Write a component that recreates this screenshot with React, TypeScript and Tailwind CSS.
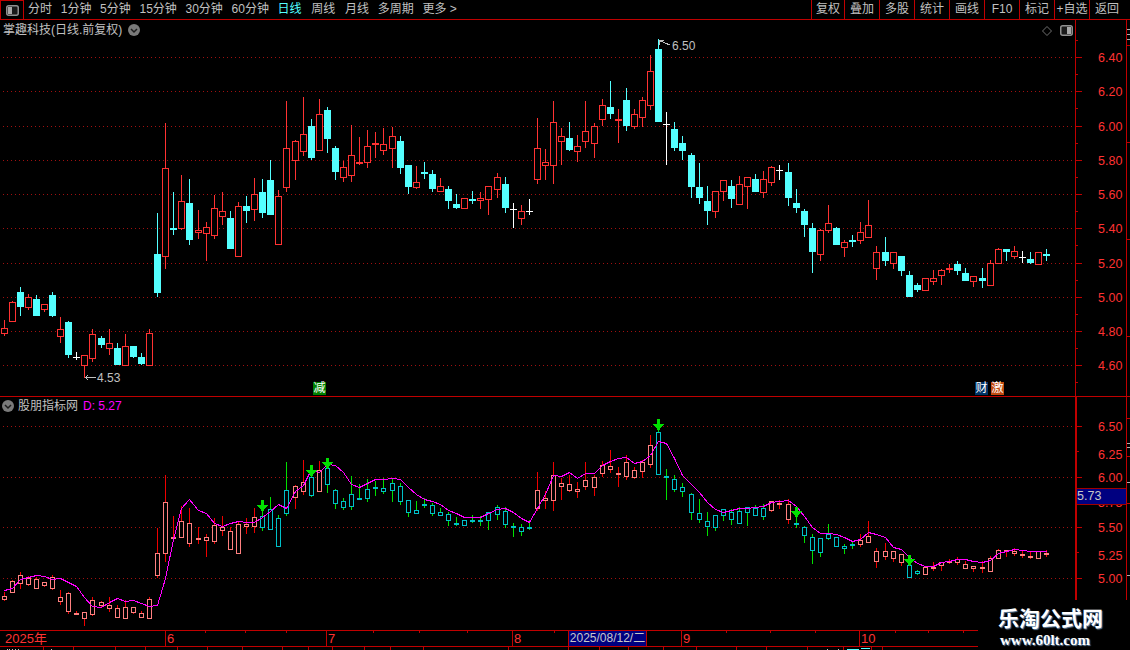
import React from 'react';

// [high, bodyTop, bodyBottom, low, kind] in screen pixels of the upper pane
type Kind = 'r' | 'c' | 'w';
type Candle = [number, number, number, number, Kind];

const candles: Candle[] = [
  [320, 328, 334, 336, 'r'], [301, 302, 322, 322, 'r'], [287, 292, 307, 316, 'c'], [294, 297, 308, 310, 'r'],
  [295, 299, 316, 316, 'c'], [304, 304, 310, 312, 'r'], [292, 295, 316, 317, 'c'], [317, 329, 337, 343, 'r'],
  [321, 322, 355, 358, 'c'], [352, 357, 358, 360, 'w'], [355, 355, 366, 378, 'r'], [329, 334, 359, 362, 'r'],
  [336, 338, 345, 348, 'c'], [329, 343, 349, 355, 'r'], [343, 348, 365, 365, 'c'], [334, 346, 366, 366, 'r'],
  [346, 346, 357, 358, 'c'], [353, 357, 364, 365, 'c'], [329, 333, 366, 366, 'r'], [213, 254, 293, 297, 'c'],
  [123, 168, 257, 269, 'r'], [192, 228, 230, 235, 'c'], [175, 201, 229, 230, 'r'], [179, 203, 240, 245, 'c'],
  [210, 230, 233, 239, 'r'], [222, 227, 234, 261, 'r'], [195, 208, 236, 239, 'r'], [192, 211, 217, 225, 'r'],
  [211, 218, 249, 249, 'c'], [202, 206, 257, 257, 'r'], [196, 206, 211, 223, 'c'], [178, 194, 210, 221, 'r'],
  [179, 192, 213, 218, 'c'], [160, 180, 215, 215, 'c'], [190, 196, 245, 245, 'r'], [101, 148, 188, 192, 'r'],
  [140, 141, 161, 180, 'r'], [97, 134, 152, 156, 'r'], [119, 126, 158, 160, 'c'], [99, 114, 151, 151, 'r'],
  [107, 110, 139, 153, 'c'], [146, 148, 172, 180, 'c'], [161, 167, 178, 182, 'r'], [125, 155, 176, 182, 'r'],
  [137, 162, 164, 165, 'r'], [130, 146, 163, 168, 'r'], [132, 143, 145, 158, 'r'], [128, 144, 151, 155, 'r'],
  [127, 136, 149, 168, 'r'], [136, 141, 168, 174, 'c'], [165, 165, 187, 194, 'c'], [166, 182, 188, 189, 'r'],
  [162, 172, 174, 179, 'c'], [170, 174, 189, 192, 'c'], [178, 186, 192, 192, 'r'], [186, 189, 201, 209, 'c'],
  [194, 204, 208, 209, 'c'], [198, 198, 209, 209, 'r'], [191, 199, 201, 204, 'c'], [192, 198, 201, 209, 'r'],
  [186, 186, 200, 215, 'r'], [173, 177, 190, 198, 'r'], [177, 184, 208, 213, 'c'], [203, 209, 210, 228, 'w'],
  [205, 211, 219, 225, 'r'], [199, 211, 212, 215, 'w'], [118, 148, 180, 184, 'r'], [149, 162, 166, 180, 'r'],
  [101, 122, 166, 184, 'r'], [128, 136, 142, 165, 'r'], [122, 138, 150, 151, 'c'], [135, 146, 152, 162, 'r'],
  [101, 131, 142, 148, 'r'], [123, 126, 144, 158, 'r'], [99, 105, 120, 126, 'r'], [81, 107, 114, 119, 'c'],
  [109, 119, 121, 143, 'r'], [88, 100, 126, 131, 'c'], [109, 114, 127, 129, 'r'], [97, 100, 118, 127, 'r'],
  [55, 71, 106, 110, 'r'], [39, 49, 122, 122, 'c'], [112, 124, 125, 165, 'w'], [122, 129, 148, 151, 'c'],
  [136, 143, 151, 160, 'c'], [153, 155, 187, 198, 'c'], [163, 187, 198, 204, 'c'], [186, 201, 211, 225, 'c'],
  [191, 191, 212, 218, 'r'], [180, 180, 192, 201, 'r'], [180, 186, 199, 208, 'c'], [176, 184, 205, 205, 'r'],
  [177, 177, 187, 209, 'r'], [174, 179, 192, 192, 'c'], [171, 179, 193, 198, 'r'], [166, 167, 183, 186, 'r'],
  [165, 170, 171, 180, 'w'], [163, 172, 198, 206, 'c'], [189, 203, 208, 213, 'c'], [209, 211, 225, 237, 'c'],
  [223, 228, 252, 273, 'c'], [229, 230, 255, 261, 'r'], [205, 223, 231, 233, 'r'], [227, 228, 245, 245, 'c'],
  [240, 242, 248, 257, 'r'], [235, 240, 242, 247, 'c'], [222, 232, 241, 244, 'r'], [200, 225, 238, 238, 'r'],
  [246, 252, 269, 280, 'r'], [237, 252, 261, 266, 'c'], [252, 252, 264, 269, 'r'], [256, 256, 271, 276, 'c'],
  [271, 275, 297, 297, 'c'], [283, 285, 290, 292, 'c'], [278, 278, 291, 291, 'r'], [270, 278, 282, 285, 'r'],
  [269, 270, 276, 285, 'r'], [264, 268, 270, 273, 'r'], [261, 264, 271, 275, 'c'], [268, 273, 281, 281, 'c'],
  [276, 276, 282, 287, 'r'], [268, 278, 281, 288, 'c'], [260, 263, 286, 286, 'r'], [248, 249, 264, 264, 'r'],
  [249, 249, 252, 261, 'c'], [246, 251, 257, 259, 'r'], [251, 257, 258, 263, 'w'], [252, 259, 263, 264, 'c'],
  [252, 252, 265, 265, 'r'], [249, 254, 256, 261, 'c'],
];

// indicator line, read off as 3x crop heights
const lineRaw = [
  585, 580, 552, 545, 540, 543, 553, 548, 560, 573, 605, 632, 637, 622, 610, 618, 615, 625, 633, 630, 550, 432, 340, 313,
  345, 353, 385, 392, 383, 377, 380, 382, 365, 347, 327, 338, 287, 270, 223, 232, 208, 210, 232, 268, 275, 265, 253,
  253, 250, 253, 275, 298, 312, 317, 327, 345, 355, 365, 367, 367, 355, 342, 340, 350, 370, 380, 340, 297, 240, 243,
  230, 250, 235, 235, 210, 198, 190, 187, 205, 197, 180, 137, 145, 190, 240, 267, 292, 320, 343, 350, 345, 340, 340,
  337, 333, 320, 318, 315, 332, 362, 395, 415, 413, 416, 425, 438, 433, 412, 417, 425, 455, 463, 487, 505, 514, 513,
  500, 497, 493, 493, 498, 500, 495, 475, 467, 463, 465, 467, 468, 468,
];

const jumps = [12, 24, 36, 48, 61, 73, 85, 97, 109, 121];
const cx = (i: number) => 4 + 8 * i + jumps.filter((j) => j <= i).length;
const toSub = (y: number) => Math.round(436.6 + (y - 57.5) * 0.5906);

const tealRanges = [[32, 35], [38, 38], [40, 65], [81, 94], [98, 105], [112, 113]];
const isTeal = (i: number) => tealRanges.some(([a, b]) => i >= a && i <= b);

const mainGrid = [57, 91, 126, 160, 194, 228, 263, 297, 331, 365];
const subGrid = [426, 477, 527, 578];
const mainLabels: [string, number][] = [
  ['6.40', 57], ['6.20', 91], ['6.00', 126], ['5.80', 160], ['5.60', 194], ['5.40', 228], ['5.20', 263], ['5.00', 297], ['4.80', 331], ['4.60', 365],
];
const subLabels: [string, number][] = [['6.50', 426], ['6.25', 454], ['6.00', 477], ['5.50', 527], ['5.25', 555], ['5.00', 578]];
const arrows: [number, number, number][] = [[32, 500, 512], [38, 465, 477], [40, 458, 469], [81, 419, 431], [98, 507, 518], [112, 555, 566]];

const leftTabs = ['分时', '1分钟', '5分钟', '15分钟', '30分钟', '60分钟', '日线', '周线', '月线', '多周期', '更多 >'];
const rightTabs = ['复权', '叠加', '多股', '统计', '画线', 'F10', '标记', '+自选', '返回'];

const topTicks = [205, 245, 286, 373, 419, 467, 554, 726, 770, 815, 895, 928, 963];
const lowTicks = [43, 73, 115, 145, 177, 207, 242, 282, 308, 332, 364, 390, 423, 508, 568, 599, 628, 663, 696, 736, 766, 807, 843, 871, 882];
const stripTicks: [number, string][] = [
  [29, '#b0b0b0'], [34, '#b0b0b0'], [39, '#b0b0b0'], [45, '#c00000'], [142, '#c00000'], [239, '#c00000'], [336, '#c00000'],
  [418, '#c00000'], [443, '#b0b0b0'], [447, '#b0b0b0'], [456, '#c00000'], [482, '#b0b0b0'], [503, '#c00000'], [575, '#b0b0b0'],
];

function PaneIcon({ flip }: { flip?: boolean }) {
  return (
    <svg width="13" height="11" viewBox="0 0 13 11" className={flip ? 'block -scale-x-100' : 'block'}>
      <rect x="0.75" y="0.75" width="11.5" height="9.5" rx="2" fill="#1a1a1a" stroke="#909090" strokeWidth="1.5" />
      <rect x="2" y="2" width="4" height="7" fill="#a8a8a8" />
    </svg>
  );
}

function Chevron() {
  return (
    <svg width="12" height="12" viewBox="0 0 12 12" className="block">
      <circle cx="6" cy="6" r="6" fill="#7a7a7a" />
      <path d="M3 5l3 3 3-3" fill="none" stroke="#1c1c1c" strokeWidth="1.5" />
    </svg>
  );
}

function Grid({ rows }: { rows: number[] }) {
  return (
    <g stroke="#a01010" strokeDasharray="1 3" shapeRendering="crispEdges">
      {rows.map((y) => (
        <line key={y} x1="3" x2="1075" y1={y + 0.5} y2={y + 0.5} />
      ))}
    </g>
  );
}

type ShapeProps = { x: number; hi: number; top: number; bot: number; lo: number; body: string; wick: string; solid: boolean; half: number };

function CandleShape({ x, hi, top, bot, lo, body, wick, solid, half }: ShapeProps) {
  const flat = bot - top <= 2;
  return (
    <g shapeRendering="crispEdges">
      {hi < top && <rect x={x} y={hi} width="1" height={top - hi} fill={wick} />}
      {lo > bot && <rect x={x} y={bot} width="1" height={lo - bot} fill={wick} />}
      {solid || flat ? (
        <rect x={x - half} y={top} width={half * 2 + 1} height={Math.max(bot - top, 1)} fill={body} />
      ) : (
        <rect x={x - half + 0.5} y={top + 0.5} width={half * 2} height={bot - top - 1} fill="#000" stroke={body} />
      )}
    </g>
  );
}

function MainChart() {
  return (
    <svg width="1075" height="376" viewBox="0 20 1075 376" className="block shrink-0">
      <Grid rows={mainGrid} />
      {candles.map(([hi, top, bot, lo, kind], i) => {
        const color = kind === 'r' ? '#ff3232' : kind === 'c' ? '#54ffff' : '#ffffff';
        return <CandleShape key={i} x={cx(i)} hi={hi} top={top} bot={bot} lo={lo} body={color} wick={color} solid={kind !== 'r'} half={3} />;
      })}
      <g stroke="#c0c0c0" fill="none" shapeRendering="crispEdges">
        <path d="M85 377.5H96M85 377.5l3-2M85 377.5l3 2" />
        <path d="M659 44.5V40.5H664M659 40.5L670 45" />
      </g>
      <text x="97" y="382" className="fill-[#c0c0c0] text-[12px]">4.53</text>
      <text x="672" y="50" className="fill-[#c0c0c0] text-[12px]">6.50</text>
    </svg>
  );
}

function SubChart() {
  const points = lineRaw.map((z, i) => `${cx(i) + 0.5},${Math.round(395 + z / 3) + 0.5}`).join(' ');
  return (
    <svg width="1075" height="233" viewBox="0 397 1075 233" className="block shrink-0">
      <Grid rows={subGrid} />
      {candles.map(([hi, top, bot, lo], i) => {
        const teal = isTeal(i);
        return (
          <CandleShape
            key={i}
            x={cx(i)}
            hi={toSub(hi)}
            top={toSub(top)}
            bot={Math.max(toSub(bot), toSub(top) + 2)}
            lo={toSub(lo)}
            body={teal ? '#00c0c8' : '#ff8080'}
            wick={teal ? '#00e000' : '#f00000'}
            solid={false}
            half={2}
          />
        );
      })}
      <polyline points={points} fill="none" stroke="#ff00ff" shapeRendering="crispEdges" />
      {arrows.map(([i, y1, y2]) => (
        <g key={i} fill="#00e000" shapeRendering="crispEdges">
          <rect x={cx(i) - 1} y={y1} width="3" height={y2 - y1 - 6} />
          <path d={`M${cx(i) - 5} ${y2 - 7}H${cx(i) + 6}L${cx(i) + 0.5} ${y2}Z`} />
        </g>
      ))}
    </svg>
  );
}

function MainAxis() {
  return (
    <svg width="55" height="376" viewBox="1075 20 55 376" className="block shrink-0">
      <g fill="#c00000" shapeRendering="crispEdges">
        <rect x="1075" y="20" width="1" height="376" />
        <rect x="1126" y="20" width="1" height="376" />
        {mainGrid.map((y) => (
          <rect key={y} x="1075" y={y} width="7" height="1" />
        ))}
        {mainGrid.map((y) => (
          <rect key={y} x="1075" y={y + 17} width="3" height="1" />
        ))}
        <rect x="1075" y="40" width="3" height="1" />
        {stripTicks.filter(([y]) => y < 396).map(([y, c]) => (
          <rect key={y} x="1127" y={y} width="3" height="1" fill={c} />
        ))}
      </g>
      {mainLabels.map(([t, y]) => (
        <text key={t} x="1098" y={y + 5} className="fill-[#ff3232] text-[12.5px]">{t}</text>
      ))}
    </svg>
  );
}

function SubAxis() {
  return (
    <div className="relative w-[55px] h-[233px] shrink-0">
      <svg width="55" height="233" viewBox="1075 397 55 233" className="block">
        <g fill="#c00000" shapeRendering="crispEdges">
          <rect x="1075" y="397" width="2" height="203" />
          <rect x="1126" y="397" width="1" height="203" />
          {subGrid.map((y) => (
            <rect key={y} x="1077" y={y} width="5" height="1" />
          ))}
          <rect x="1077" y="451" width="2" height="1" />
          <rect x="1077" y="552" width="2" height="1" />
          {stripTicks.filter(([y]) => y > 396).map(([y, c]) => (
            <rect key={y} x="1127" y={y} width="3" height="1" fill={c} />
          ))}
        </g>
        <text x="1098" y="507" className="fill-[#ff3232] text-[12.5px]">5.75</text>
        {subLabels.map(([t, y]) => (
          <text key={t} x="1098" y={y + 5} className="fill-[#ff3232] text-[12.5px]">{t}</text>
        ))}
      </svg>
      {/* crosshair price */}
      <div className="absolute left-[2px] top-[91px] w-[49px] h-[17px] bg-[#000080] border-y border-[#a00000] text-[#c8c8c8] text-[12.5px] leading-[15px]">
        5.73
      </div>
    </div>
  );
}

function DateBar() {
  return (
    <div className="relative h-[20px] w-[978px]">
      <svg width="978" height="20" viewBox="0 630 978 20" className="block">
        <g fill="#c00000" shapeRendering="crispEdges">
          <rect x="0" y="630" width="978" height="1" />
          <rect x="0" y="646" width="978" height="1" />
          {[165, 326, 512, 681, 859].map((x) => (
            <rect key={x} x={x} y="630" width="1" height="16" />
          ))}
          {topTicks.map((x) => (
            <rect key={x} x={x} y="631" width="1" height="2" />
          ))}
          {lowTicks.map((x) => (
            <rect key={x} x={x} y="647" width="1" height="3" />
          ))}
        </g>
        <g fill="#c0c0c0" shapeRendering="crispEdges">
          {[7, 9, 12, 15, 18, 51, 827, 838].map((x) => (
            <rect key={x} x={x} y="649" width="1" height="1" />
          ))}
          <rect x="847" y="649" width="12" height="1" fill="#54ffff" />
          <rect x="861" y="648" width="9" height="1" fill="#54ffff" />
        </g>
        <text x="5" y="643" className="fill-[#ff3232] text-[13px]">2025年</text>
        <text x="167" y="643" className="fill-[#ff3232] text-[13px]">6</text>
        <text x="328" y="643" className="fill-[#ff3232] text-[13px]">7</text>
        <text x="514" y="643" className="fill-[#ff3232] text-[13px]">8</text>
        <text x="683" y="643" className="fill-[#ff3232] text-[13px]">9</text>
        <text x="861" y="643" className="fill-[#ff3232] text-[13px]">10</text>
      </svg>
      <div className="absolute left-[568px] top-0 w-[79px] h-[17px] bg-[#000080] border border-[#c00000] text-[#c8c8c8] text-[12px] leading-[15px] text-center whitespace-nowrap">
        2025/08/12/二
      </div>
    </div>
  );
}

export default function App() {
  return (
    <div className="relative flex flex-col w-[1130px] h-[650px] overflow-hidden bg-black text-[#c0c0c0] font-['Liberation_Sans','Noto_Sans_CJK_SC',sans-serif]">
      {/* toolbar */}
      <div className="flex items-stretch justify-between h-[20px] shrink-0 border-b border-[#c00000] text-[12px] leading-[19px]">
        <div className="flex items-stretch">
          <div className="flex items-center justify-center w-[24px] border-l border-t border-r border-[#c00000]">
            <PaneIcon />
          </div>
          <div className="flex gap-[8.7px] pl-[4px]">
            {leftTabs.map((t) => (
              <span key={t} className={t === '日线' ? 'text-[#54ffff]' : t === '周线' || t === '月线' ? 'ml-[1px]' : ''}>{t}</span>
            ))}
          </div>
        </div>
        <div className="flex mr-[6px]">
          {rightTabs.map((t, i) => (
            <span key={t} className={`border-l border-[#c00000] text-center ${i === 0 ? 'w-[33px]' : 'w-[35px]'}`}>{t}</span>
          ))}
        </div>
      </div>

      {/* price pane */}
      <div className="relative flex h-[377px] shrink-0 border-b border-[#c00000]">
        <MainChart />
        <MainAxis />
        <div className="absolute left-[3px] top-0 flex items-center gap-[6px] h-[19px] text-[12px]">
          <span>掌趣科技(日线.前复权)</span>
          <Chevron />
        </div>
        <div className="absolute left-[1042px] top-[5px] flex items-center gap-[8px]">
          <svg width="10" height="10" viewBox="0 0 10 10" className="block">
            <path d="M5 0.5L9.5 5L5 9.5L0.5 5Z" fill="none" stroke="#707070" />
          </svg>
          <PaneIcon flip />
        </div>
        <span className="absolute left-[313px] top-[362px] w-[13px] h-[13px] bg-[#008000] text-white text-[12px] leading-[13px] text-center">减</span>
        <span className="absolute left-[975px] top-[362px] w-[13px] h-[13px] bg-[#003366] text-white text-[12px] leading-[13px] text-center">财</span>
        <span className="absolute left-[991px] top-[362px] w-[13px] h-[13px] bg-[#c04a10] text-white text-[12px] leading-[13px] text-center">激</span>
      </div>

      {/* indicator pane */}
      <div className="relative flex h-[233px] shrink-0">
        <SubChart />
        <SubAxis />
        <div className="absolute left-[2px] top-0 flex items-center gap-[4px] h-[17px] text-[12px]">
          <Chevron />
          <span>股朋指标网</span>
          <span className="ml-[1px] text-[#ff00ff]">D: 5.27</span>
        </div>
      </div>

      <DateBar />

      {/* site stamp */}
      <div className="absolute left-[978px] top-[600px] w-[152px] h-[50px] bg-black">
        <div className="absolute left-[20px] top-[5px] text-[21px] leading-[28px] font-bold text-white whitespace-nowrap [text-shadow:1px_1px_1px_#6080a0]">
          乐淘公式网
        </div>
        <div className="absolute left-[22px] top-[32px] text-[15px] leading-[17px] font-bold text-white whitespace-nowrap font-['Liberation_Serif',serif] [text-shadow:1px_1px_1px_#6080a0]">
          www.60lt.com
        </div>
      </div>
    </div>
  );
}
